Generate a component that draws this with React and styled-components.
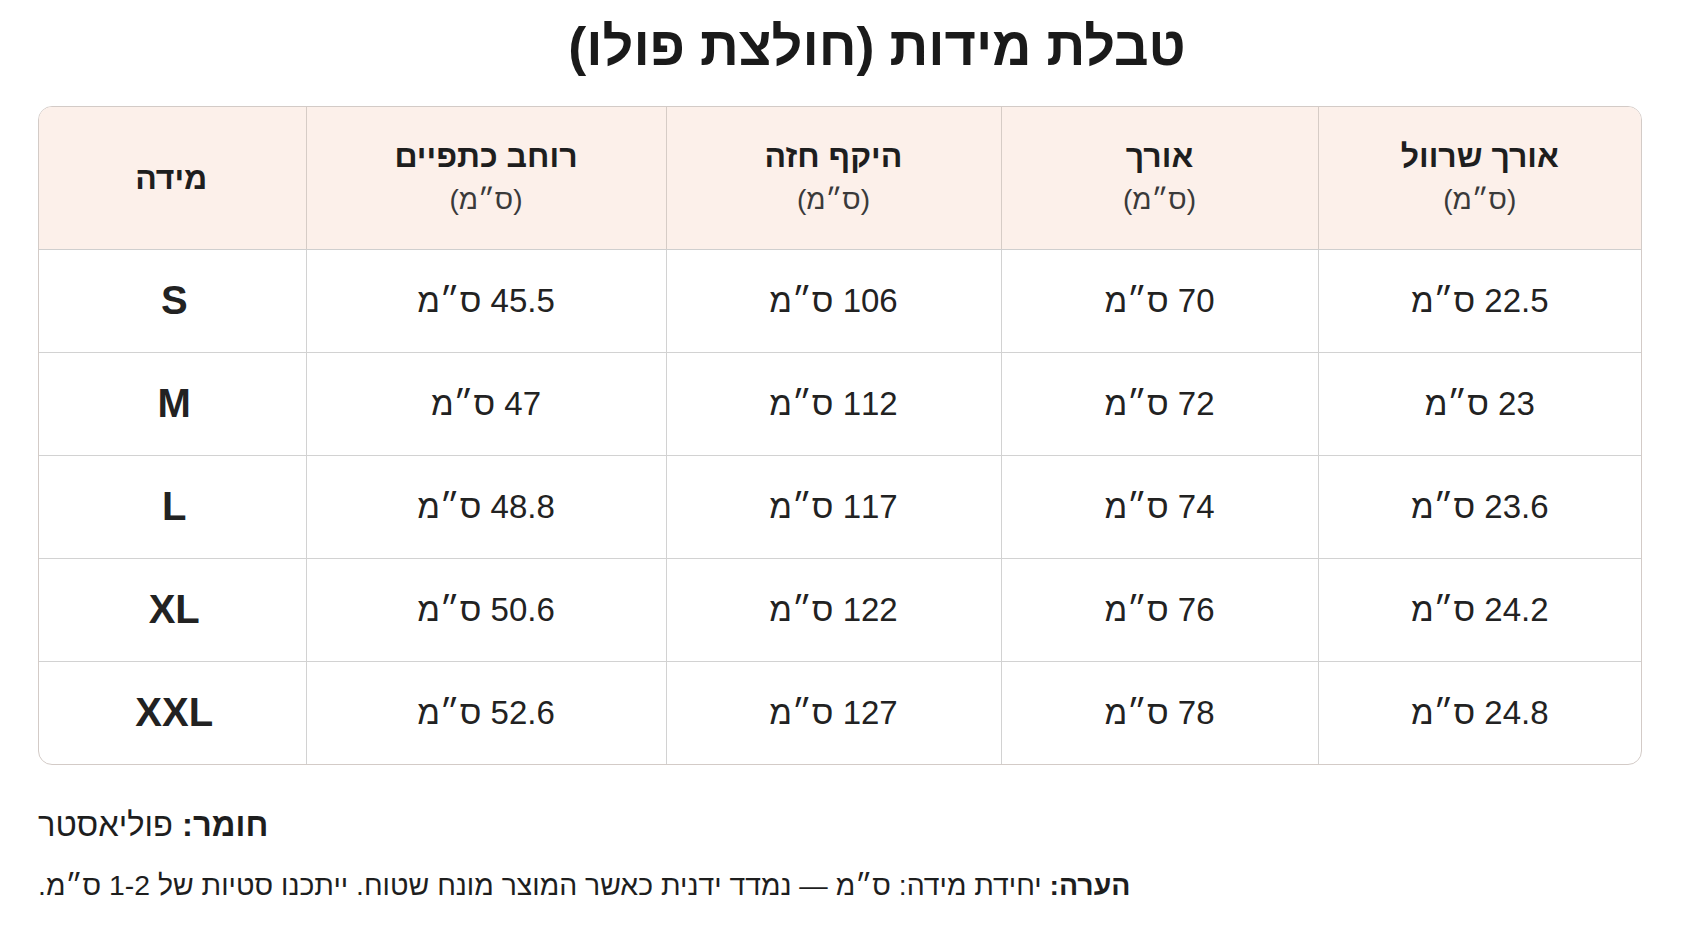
import React from "react";
import styled, { createGlobalStyle } from "styled-components";

const Global = createGlobalStyle`
  html, body { margin: 0; padding: 0; background: #ffffff; }
  body { font-family: "Liberation Sans", "DejaVu Sans", Arial, sans-serif; color: #222; }
`;

const Page = styled.div`
  direction: rtl;
  padding: 0 39px 0 38px;
  box-sizing: border-box;
  width: 1681px;
`;

const Title = styled.h1`
  margin: 0;
  height: 106px;
  display: flex;
  align-items: center;
  justify-content: center;
  padding-left: 74px;
  padding-bottom: 14px;
  box-sizing: border-box;
  font-size: 54px;
  font-weight: 700;
  color: #1a1a1a;
`;

const TableWrap = styled.div`
  border: 1px solid #d3cbc7;
  border-radius: 14px;
  overflow: hidden;
`;

const Table = styled.table`
  width: 100%;
  border-collapse: collapse;
  table-layout: fixed;
`;

const HeadRow = styled.tr`
  background: #fcf0ea;
  height: 142px;
`;

const Th = styled.th`
  border-left: 1px solid #d6ccc6;
  border-bottom: 1px solid #cfcfcf;
  text-align: center;
  vertical-align: middle;
  padding: 0;
  &:last-child { border-left: none; }
`;

const HeadMain = styled.div`
  font-size: 32px;
  font-weight: 700;
  color: #1e1e1e;
  line-height: 40px;
`;

const HeadSub = styled.div`
  font-size: 28px;
  font-weight: 400;
  color: #3a3a3a;
  line-height: 40px;
  margin-top: 4px;
`;

const Row = styled.tr`
  height: 103px;
  &:not(:last-child) td { border-bottom: 1px solid #d2d2d2; }
`;

const Td = styled.td`
  border-left: 1px solid #d2d2d2;
  text-align: center;
  vertical-align: middle;
  padding: ${(p) => (p.$bold ? "0 0 0 6px" : "0")};
  font-size: ${(p) => (p.$bold ? "40px" : "33px")};
  font-weight: ${(p) => (p.$bold ? 700 : 400)};
  color: #222;
  &:last-child { border-left: none; }
`;

const Footer = styled.div`
  padding-top: 37px;
  text-align: left;
`;

const Material = styled.p`
  margin: 0;
  font-size: 32.7px;
  line-height: 46px;
  color: #1e1e1e;
`;

const Note = styled.p`
  margin: 16px 0 0;
  font-size: 28.4px;
  line-height: 42px;
  color: #1e1e1e;
`;

const cols = [
  { w: 323, main: "אורך שרוול", sub: "(ס״מ)" },
  { w: 317, main: "אורך", sub: "(ס״מ)" },
  { w: 335, main: "היקף חזה", sub: "(ס״מ)" },
  { w: 360, main: "רוחב כתפיים", sub: "(ס״מ)" },
  { w: 269, main: "מידה" },
];

const rows = [
  ["22.5", "70", "106", "45.5", "S"],
  ["23", "72", "112", "47", "M"],
  ["23.6", "74", "117", "48.8", "L"],
  ["24.2", "76", "122", "50.6", "XL"],
  ["24.8", "78", "127", "52.6", "XXL"],
];

export default function App() {
  return (
    <>
      <Global />
      <Page>
        <Title>טבלת מידות (חולצת פולו)</Title>
        <TableWrap>
          <Table>
            <colgroup>
              {cols.map((c, i) => (
                <col key={i} style={{ width: c.w }} />
              ))}
            </colgroup>
            <thead>
              <HeadRow>
                {cols.map((c, i) => (
                  <Th key={i}>
                    <HeadMain>{c.main}</HeadMain>
                    {c.sub && <HeadSub>{c.sub}</HeadSub>}
                  </Th>
                ))}
              </HeadRow>
            </thead>
            <tbody>
              {rows.map((r, i) => (
                <Row key={i}>
                  {r.map((v, j) => (
                    <Td key={j} $bold={j === 4}>
                      {j === 4 ? v : `${v} ס״מ`}
                    </Td>
                  ))}
                </Row>
              ))}
            </tbody>
          </Table>
        </TableWrap>
        <Footer>
          <Material>
            <b>חומר:</b> פוליאסטר
          </Material>
          <Note>
            <b>הערה:</b> יחידת מידה: ס״מ — נמדד ידנית כאשר המוצר מונח שטוח. ייתכנו סטיות של 1-2 ס״מ.
          </Note>
        </Footer>
      </Page>
    </>
  );
}
